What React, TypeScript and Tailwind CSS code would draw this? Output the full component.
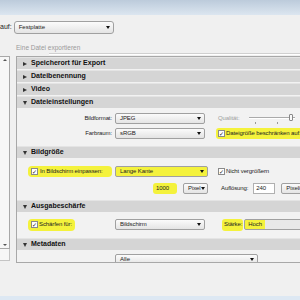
import React from 'react';

const font = { fontFamily: '"Liberation Sans", Arial, sans-serif' };

function Select({ value, className = '', hl = false }: { value: string; className?: string; hl?: boolean }) {
  return (
    <div
      className={`shrink-0 h-[11px] flex items-center justify-between pl-[4px] pr-[3px] border border-[#a0a0a0] rounded-[2px] text-[6px] text-[#222] overflow-hidden ${
        hl ? 'bg-[#f4f23c]' : 'bg-gradient-to-b from-[#fbfbfb] to-[#e4e4e4]'
      } ${className}`}
    >
      <span>{value}</span>
      <span className="w-0 h-0 border-l-[2.5px] border-r-[2.5px] border-t-[3px] border-l-transparent border-r-transparent border-t-[#111]" />
    </div>
  );
}

function Check({ className = '' }: { className?: string }) {
  return (
    <span className={`shrink-0 inline-flex items-center justify-center w-[7px] h-[7px] border border-[#8a8a8a] bg-white text-[6px] leading-none text-[#222] ${className}`}>
      ✓
    </span>
  );
}

function Header({ title, open = false }: { title: string; open?: boolean }) {
  return (
    <div className="h-[12px] mt-[1px] flex items-center bg-[#d5d5d5] border-t border-[#e4e4e4] pl-[6px] gap-[3px]">
      {open ? (
        <span className="w-0 h-0 border-l-[2.5px] border-r-[2.5px] border-t-[4px] border-l-transparent border-r-transparent border-t-[#333]" />
      ) : (
        <span className="w-0 h-0 border-t-[2.5px] border-b-[2.5px] border-l-[4px] border-t-transparent border-b-transparent border-l-[#333]" />
      )}
      <span className="text-[7px] font-bold text-[#111] ml-[1px]">{title}</span>
    </div>
  );
}

export default function App() {
  return (
    <div className="w-[300px] h-[300px] overflow-hidden bg-[#f0f0f0] relative whitespace-nowrap" style={font}>
      <div className="h-[15px] bg-gradient-to-b from-[#bccbdb] to-[#dce6f0]" />
      <div className="flex items-center h-[22px] mt-[1px]">
        <span className="text-[7px] text-[#222]">auf:</span>
        <Select value="Festplatte" className="ml-[2px] w-[100px] h-[13px] rounded-[3px] text-[6.5px]" />
      </div>
      <div className="flex items-end h-[15px]">
        <span className="ml-[16px] text-[6.5px] text-[#9a9a9a]">Eine Datei exportieren</span>
      </div>
      <div className="h-[2px] ml-[49px] border-t border-[#d0d0d0] border-b border-b-white" />
      <div className="flex mt-[1px]">
        <div className="w-[10px] shrink-0 flex flex-col">
          <div className="h-[193px] border border-l-0 border-[#a8a8a8] bg-[#f7f7f7] flex flex-col items-center justify-between py-[2px]">
            <span className="w-0 h-0 border-l-[2px] border-r-[2px] border-b-[2.5px] border-l-transparent border-r-transparent border-b-[#555]" />
            <span className="w-0 h-0 border-l-[2px] border-r-[2px] border-t-[2.5px] border-l-transparent border-r-transparent border-t-[#555]" />
          </div>
          <div className="h-[12px] border border-t-0 border-l-0 border-[#c4c4c4] bg-[#f7f7f7]" />
        </div>
        <div className="ml-[6px] w-[300px] shrink-0 h-[207px] border border-r-0 border-[#a8a8a8] bg-[#f2f2f2] overflow-hidden">
          <div className="-mt-[1px]">
            <Header title="Speicherort für Export" />
            <Header title="Dateibenennung" />
            <Header title="Video" />
            <Header title="Dateieinstellungen" open />
            <div className="pt-[5px] pb-[6px] flex flex-col gap-[4px] text-[6px] tracking-[-0.1px] text-[#222]">
              <div className="flex items-center h-[11px]">
                <span className="shrink-0 w-[98px] text-right pr-[3px]">Bildformat:</span>
                <Select value="JPEG" className="w-[90px]" />
                <span className="ml-[13px] text-[#a0a0a0]">Qualität:</span>
                <div className="ml-[10px] shrink-0 relative w-[46px] h-[11px]">
                  <div className="absolute left-0 right-0 top-[4px] h-[2px] border-t border-[#aaa] border-b border-b-white" />
                  <div className="absolute right-[2px] top-[1px] w-[4px] h-[7px] border border-[#888] bg-[#f8f8f8] rounded-[1px]" />
                  <div className="absolute left-[6px] top-[9px] w-px h-[2px] bg-[#999]" />
                  <div className="absolute left-[28px] top-[9px] w-px h-[2px] bg-[#999]" />
                </div>
              </div>
              <div className="flex items-center h-[11px]">
                <span className="shrink-0 w-[98px] text-right pr-[3px]">Farbraum:</span>
                <Select value="sRGB" className="w-[90px]" />
                <div className="ml-[11px] shrink-0 flex items-center bg-[#f4f23c] h-[11px] pl-[2px] pr-[4px] rounded-[3px]">
                  <Check className="mr-[1px]" />
                  <span>Dateigröße beschränken auf:</span>
                </div>
              </div>
            </div>
            <Header title="Bildgröße" open />
            <div className="pt-[8px] pb-[5px] flex flex-col gap-[6px] text-[6px] tracking-[-0.1px] text-[#222]">
              <div className="flex items-center h-[11px]">
                <div className="ml-[11px] shrink-0 w-[84px] h-[11px] flex items-center bg-[#f4f23c] rounded-[4px] pl-[3px]">
                  <Check className="mr-[2px]" />
                  <span>In Bildschirm einpassen:</span>
                </div>
                <Select value="Lange Kante" className="ml-[3px] w-[93px]" hl />
                <div className="ml-[10px] shrink-0 flex items-center">
                  <Check className="bg-[#f4f23c] mr-[1px]" />
                  <span>Nicht vergrößern</span>
                </div>
              </div>
              <div className="flex items-center h-[11px]">
                <div className="ml-[136px] shrink-0 w-[24px] h-[11px] flex items-center bg-[#f4f23c] rounded-[3px] pl-[3px]">1000</div>
                <Select value="Pixel" className="ml-[6px] w-[25px]" />
                <span className="ml-[13px] shrink-0">Auflösung:</span>
                <div className="ml-[5px] shrink-0 w-[22px] h-[11px] bg-white border border-[#b0b0b0] flex items-center pl-[2px]">240</div>
                <Select value="Pixel/Zoll" className="ml-[6px] w-[40px]" />
              </div>
            </div>
            <Header title="Ausgabeschärfe" open />
            <div className="pt-[7px] pb-[7px] text-[6px] tracking-[-0.1px] text-[#222]">
              <div className="flex items-center h-[11px]">
                <div className="ml-[11px] shrink-0 w-[47px] h-[12px] flex items-center bg-[#f4f23c] rounded-[4px] pl-[3px]">
                  <Check className="mr-[1px]" />
                  <span>Schärfen für:</span>
                </div>
                <Select value="Bildschirm" className="ml-[40px] w-[90px]" />
                <div className="ml-[17px] shrink-0 h-[12px] flex items-center bg-[#f4f23c] rounded-[3px] pl-[2px] pr-[1px]">Stärke:</div>
                <div className="ml-[1px] shrink-0 h-[11px] w-[70px] border border-[#a0a0a0] rounded-[2px] bg-gradient-to-r from-[#f4f23c] from-30% to-[#e8e8e8] to-30% flex items-center pl-[3px]">Hoch</div>
              </div>
            </div>
            <Header title="Metadaten" open />
            <div className="pt-[4px]">
              <Select value="Alle" className="ml-[98px] w-[143px]" />
            </div>
          </div>
        </div>
      </div>
      <div className="absolute left-0 right-0 bottom-0 h-[4px] bg-[#dde8f3]" />
    </div>
  );
}
